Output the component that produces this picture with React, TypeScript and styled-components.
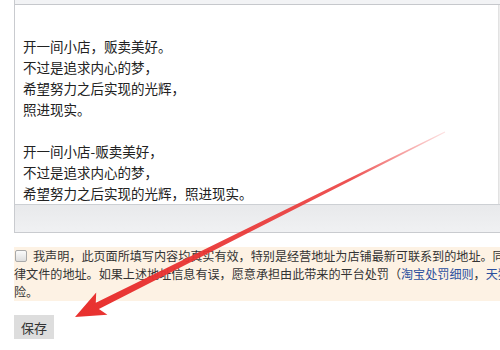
import React from 'react';
import styled, { createGlobalStyle } from 'styled-components';

const GlobalStyle = createGlobalStyle`
  html, body {
    margin: 0;
    padding: 0;
    background: #ffffff;
  }
  body {
    font-family: "Noto Sans CJK SC", "Liberation Sans", sans-serif;
    color: #333333;
  }
`;

const Page = styled.div`
  position: relative;
  width: 500px;
  height: 350px;
  overflow: hidden;
  padding-left: 14px;
  box-sizing: border-box;
`;

const Editor = styled.div`
  width: 520px;
  border-left: 1px solid #c9cbcf;
  border-bottom: 1px solid #c9cbcf;
  display: flex;
  flex-direction: column;
`;

const Toolbar = styled.div`
  height: 4px;
  background: #f2f3f5;
  border-bottom: 1px solid #c6c8cc;
`;

const Body = styled.div`
  display: flex;
  height: 199px;
`;

const Content = styled.div`
  width: 483px;
  box-sizing: border-box;
  padding: 31px 0 0 8px;
  background: #ffffff;
  font-size: 13.5px;
  line-height: 21px;
  color: #222222;
`;

const Scrollbar = styled.div`
  flex: 1;
  background: #ededed;
  border-left: 1px solid #e2e2e2;
`;

const Para = styled.p`
  margin: 0 0 21px;
`;

const Footer = styled.div`
  height: 27px;
  border-top: 1px solid #cdd0d4;
  background: linear-gradient(#e8e9eb, #f0f1f3);
`;

const Notice = styled.div`
  margin-top: 14px;
  width: 520px;
  background: #fdf2e4;
  font-size: 12.1px;
  line-height: 18px;
  color: #333333;
`;

const NoticeLine = styled.div`
  white-space: nowrap;
  display: flex;
  align-items: center;
`;

const Check = styled.span`
  display: inline-block;
  width: 10px;
  height: 10px;
  margin: 0 6px 0 1px;
  border: 1px solid #a9a9a9;
  border-radius: 2px;
  background: linear-gradient(#fbfbfb, #dedede);
  flex-shrink: 0;
`;

const Link = styled.span`
  color: #2b4f9e;
`;

const SaveButton = styled.button`
  margin-top: 14px;
  width: 40px;
  height: 24px;
  padding: 0;
  border: none;
  background: #dddddd;
  font-family: "Noto Sans CJK SC", "Liberation Sans", sans-serif;
  font-size: 13px;
  color: #333333;
`;

const Overlay = styled.svg`
  position: absolute;
  left: 0;
  top: 0;
  pointer-events: none;
`;

const Arrow: React.FC = () => {
  const tail = [445, 132];
  const tip = [75, 317];
  const dx = tip[0] - tail[0];
  const dy = tip[1] - tail[1];
  const len = Math.hypot(dx, dy);
  const ux = dx / len;
  const uy = dy / len;
  const nx = -uy;
  const ny = ux;
  const head = 28;
  const bx = tip[0] - ux * head;
  const by = tip[1] - uy * head;
  const p = (x: number, y: number) => `${x.toFixed(1)},${y.toFixed(1)}`;
  const pts = [
    p(tail[0] + nx * 0.4, tail[1] + ny * 0.4),
    p(bx + ux * 3 + nx * 3.4, by + uy * 3 + ny * 3.4),
    p(bx - ux * 2 + nx * 12.5, by - uy * 2 + ny * 12.5),
    p(tip[0], tip[1]),
    p(bx - ux * 2 - nx * 12.5, by - uy * 2 - ny * 12.5),
    p(bx + ux * 3 - nx * 3.4, by + uy * 3 - ny * 3.4),
    p(tail[0] - nx * 0.4, tail[1] - ny * 0.4),
  ].join(' ');
  return (
    <Overlay width="500" height="350" viewBox="0 0 500 350">
      <defs>
        <linearGradient id="fade" gradientUnits="userSpaceOnUse" x1={tail[0]} y1={tail[1]} x2={tip[0]} y2={tip[1]}>
          <stop offset="0" stopColor="#ee3b3b" stopOpacity="0.15" />
          <stop offset="0.25" stopColor="#ea3535" stopOpacity="0.85" />
          <stop offset="1" stopColor="#e8302e" stopOpacity="1" />
        </linearGradient>
      </defs>
      <polygon points={pts} fill="url(#fade)" />
    </Overlay>
  );
};

export default function App() {
  return (
    <>
      <GlobalStyle />
      <Page>
        <Editor>
          <Toolbar />
          <Body>
            <Content>
              <Para>
                开一间小店，贩卖美好。
                <br />
                不过是追求内心的梦，
                <br />
                希望努力之后实现的光辉，
                <br />
                照进现实。
              </Para>
              <Para>
                开一间小店-贩卖美好，
                <br />
                不过是追求内心的梦，
                <br />
                希望努力之后实现的光辉，照进现实。
              </Para>
            </Content>
            <Scrollbar />
          </Body>
          <Footer />
        </Editor>
        <Notice>
          <NoticeLine>
            <Check />
            我声明，此页面所填写内容均真实有效，特别是经营地址为店铺最新可联系到的地址。同时可以作为接受法
          </NoticeLine>
          <NoticeLine>
            律文件的地址。如果上述地址信息有误，愿意承担由此带来的平台处罚（<Link>淘宝处罚细则</Link>，<Link>天猫处罚细则</Link>）带来的风
          </NoticeLine>
          <NoticeLine>险。</NoticeLine>
        </Notice>
        <SaveButton>保存</SaveButton>
        <Arrow />
      </Page>
    </>
  );
}
